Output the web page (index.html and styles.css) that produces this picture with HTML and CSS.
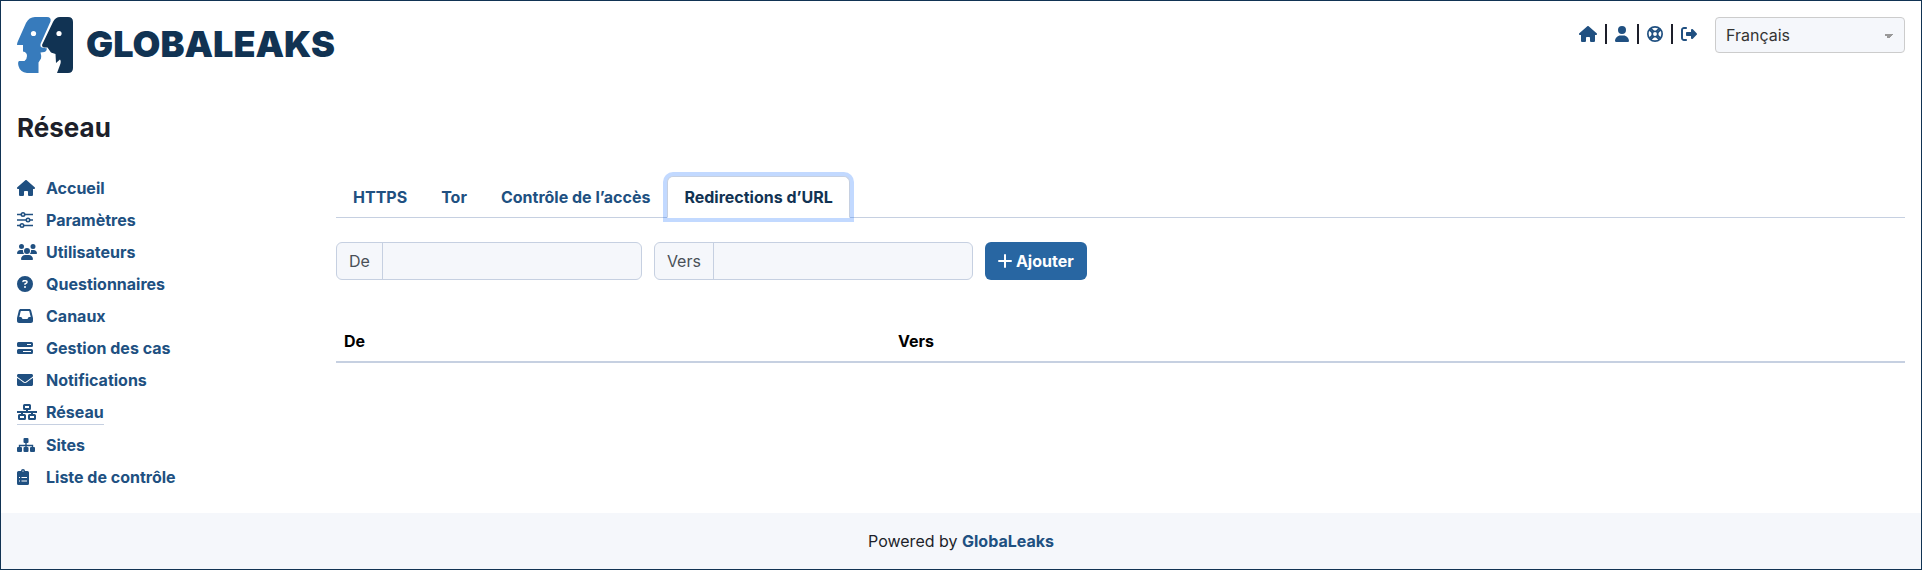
FILE: index.html
```html
<!DOCTYPE html>
<html lang="fr">
<head>
<meta charset="utf-8">
<title>GlobaLeaks - Réseau</title>
<link rel="stylesheet" href="styles.css">
</head>
<body>
<div class="page">
  <header class="header">
    <a class="logo" href="#" aria-label="GlobaLeaks">
      <svg class="logo-mark" viewBox="0 0 56 56" aria-hidden="true">
        <path fill="#377bbc" d="M18 0h12q4.500 0 3.500 4.500L23.500 27q-.5 3 1.500 3.500l5 1q-.5 3-2.500 3.500l-4 .5q1 3 .5 6l-2.500 4V56H10Q3 55 1.500 49q-1-4 .5-5h5.500q2.500-2 2.500-5 0-4-4-4.500V28H0q0-2 1-4L9 6q3-6 9-6z"/>
        <path fill="#113353" d="M43 0h8q5 0 5 5v46q0 5-5 5H40l3-8q1.500-4 0-5.500L39 46l-.5-9-4.500-1.500-3.500-5H27q-2-.5-2-2.500L36 5q2.500-5 7-5z"/>
        <circle cx="16.500" cy="16.500" r="2.600" fill="#fff"/>
        <circle cx="42" cy="16.500" r="2.600" fill="#fff"/>
      </svg>
      <span class="logo-text">GLOBALEAKS</span>
    </a>
    <div class="tools">
      <nav class="quick" aria-label="Compte">
        <a href="#" aria-label="Accueil"><svg class="icon" viewBox="0 0 576 512"><use href="#i-house"/></svg></a>
        <span class="bar"></span>
        <a href="#" aria-label="Préférences"><svg class="icon" viewBox="0 0 448 512"><path d="M224 256A128 128 0 1 0 224 0a128 128 0 1 0 0 256zm-45.700 48C79.800 304 0 383.800 0 482.300C0 498.700 13.300 512 29.700 512H418.300c16.400 0 29.700-13.300 29.700-29.700C448 383.800 368.200 304 269.700 304H178.300z"/></svg></a>
        <span class="bar"></span>
        <a href="#" aria-label="Aide"><svg class="icon" viewBox="0 0 512 512"><g fill="none" stroke="currentColor" stroke-width="54"><circle cx="256" cy="256" r="229"/><circle cx="256" cy="256" r="88"/><path d="M75 117l98 98M117 75l98 98M437 117l-98 98M395 75l-98 98M75 395l98-98M117 437l98-98M437 395l-98-98M395 437l-98-98"/></g></svg></a>
        <span class="bar"></span>
        <a href="#" aria-label="Déconnexion"><svg class="icon" viewBox="0 0 512 512"><path d="M377.900 105.900L500.700 228.700c7.200 7.200 11.300 17.100 11.300 27.300s-4.100 20.100-11.300 27.300L377.900 406.100c-6.400 6.400-15 9.900-24 9.900c-18.700 0-33.900-15.200-33.900-33.900l0-62.100-128 0c-17.700 0-32-14.300-32-32l0-64c0-17.700 14.300-32 32-32l128 0 0-62.100c0-18.700 15.200-33.900 33.900-33.900c9 0 17.600 3.600 24 9.900zM160 96L96 96c-17.700 0-32 14.300-32 32l0 256c0 17.700 14.300 32 32 32l64 0c17.700 0 32 14.300 32 32s-14.300 32-32 32l-64 0c-53 0-96-43-96-96L0 128C0 75 43 32 96 32l64 0c17.700 0 32 14.300 32 32s-14.300 32-32 32z"/></svg></a>
      </nav>
      <select class="lang" aria-label="Langue"><option>Français</option></select>
    </div>
  </header>

  <h1 class="title">Réseau</h1>

  <div class="body">
    <nav class="side" aria-label="Administration">
      <a href="#"><span class="slot"><svg class="icon" viewBox="0 0 576 512"><path id="i-house" d="M575.800 255.500c0 18-15 32.100-32 32.100h-32l.7 160.200c0 2.700-.2 5.400-.5 8.100V472c0 22.100-17.900 40-40 40H456c-1.100 0-2.200 0-3.300-.1c-1.400 .1-2.800 .1-4.200 .1H416 392c-22.100 0-40-17.900-40-40V448 384c0-17.700-14.300-32-32-32H256c-17.700 0-32 14.300-32 32v64 24c0 22.100-17.900 40-40 40H160 128.100c-1.500 0-3-.1-4.500-.2c-1.200 .1-2.400 .2-3.600 .2H104c-22.100 0-40-17.900-40-40V360c0-.9 0-1.900 .1-2.800V287.600H32c-18 0-32-14-32-32.100c0-9 3-17 10-24L266.400 8c7-7 15-8 22-8s15 2 21 7L564.800 231.500c8 7 12 15 11 24z"/></svg></span>Accueil</a>
      <a href="#"><span class="slot"><svg class="icon" viewBox="0 0 16 16"><g fill="none" stroke="currentColor" stroke-width="1.600"><path d="M0 2.500h4M8 2.500h8M0 8h9M13 8h3M0 13.500h3M7 13.500h9"/><circle cx="6" cy="2.500" r="1.700"/><circle cx="11" cy="8" r="1.700"/><circle cx="5" cy="13.500" r="1.700"/></g></svg></span>Paramètres</a>
      <a href="#"><span class="slot"><svg class="icon" viewBox="0 0 640 512"><path d="M144 0a80 80 0 1 1 0 160A80 80 0 1 1 144 0zM512 0a80 80 0 1 1 0 160A80 80 0 1 1 512 0zM0 298.700C0 239.800 47.800 192 106.700 192h42.700c15.900 0 31 3.500 44.600 9.700c-1.300 7.200-1.900 14.700-1.900 22.300c0 38.200 16.800 72.500 43.300 96c-.2 0-.4 0-.7 0H21.300C9.600 320 0 310.400 0 298.700zM405.300 320c-.2 0-.4 0-.7 0c26.600-23.500 43.300-57.800 43.300-96c0-7.600-.7-15-1.900-22.300c13.600-6.300 28.700-9.700 44.600-9.700h42.700C592.200 192 640 239.800 640 298.700c0 11.800-9.600 21.300-21.300 21.300H405.300zM224 224a96 96 0 1 1 192 0 96 96 0 1 1 -192 0zM128 485.300C128 411.700 187.700 352 261.300 352H378.700C452.300 352 512 411.700 512 485.300c0 14.700-11.900 26.700-26.700 26.700H154.700c-14.700 0-26.700-11.900-26.700-26.700z"/></svg></span>Utilisateurs</a>
      <a href="#"><span class="slot"><svg class="icon" viewBox="0 0 512 512"><path fill-rule="evenodd" d="M256 512A256 256 0 1 0 256 0a256 256 0 1 0 0 512zM169.800 165.300c7.900-22.300 29.100-37.300 52.800-37.300h58.300c34.900 0 63.100 28.300 63.100 63.100c0 22.600-12.100 43.500-31.700 54.800L280 264.400c-.2 13-10.900 23.600-24 23.600c-13.300 0-24-10.700-24-24V250.500c0-8.600 4.600-16.500 12.100-20.800l44.300-25.400c4.700-2.700 7.600-7.700 7.600-13.100c0-8.400-6.800-15.100-15.100-15.100H222.600c-3.400 0-6.400 2.100-7.500 5.300l-.4 1.200c-4.400 12.500-18.200 19-30.600 14.600s-19-18.200-14.600-30.600l.4-1.200zM224 352a32 32 0 1 1 64 0 32 32 0 1 1 -64 0z"/></svg></span>Questionnaires</a>
      <a href="#"><span class="slot"><svg class="icon" viewBox="0 0 512 512"><path d="M121 32C91.600 32 66 52 58.900 80.500L1.900 308.400C.6 313.500 0 318.700 0 323.900V416c0 35.300 28.700 64 64 64H448c35.300 0 64-28.700 64-64V323.900c0-5.200-.6-10.400-1.900-15.500l-57-227.900C446 52 420.400 32 391 32H121zm0 64H391l48 192H387.800c-12.100 0-23.200 6.800-28.600 17.700l-14.300 28.600c-5.400 10.800-16.500 17.700-28.600 17.700H195.800c-12.100 0-23.200-6.800-28.600-17.700l-14.300-28.600c-5.400-10.800-16.500-17.700-28.600-17.700H73L121 96z"/></svg></span>Canaux</a>
      <a href="#"><span class="slot"><svg class="icon" viewBox="0 0 16 16"><path fill-rule="evenodd" d="M1.500 2h13Q16 2 16 3.500v2Q16 7 14.500 7h-13Q0 7 0 5.500v-2Q0 2 1.500 2zM10 4v1h4V4zM1.500 9h13Q16 9 16 10.500v2q0 1.500-1.500 1.500h-13Q0 14 0 12.500v-2Q0 9 1.500 9zM6 11v1h8v-1z"/></svg></span>Gestion des cas</a>
      <a href="#"><span class="slot"><svg class="icon" viewBox="0 0 512 512"><path d="M502.300 190.800c3.900-3.100 9.700-.2 9.700 4.700V400c0 26.500-21.500 48-48 48H48c-26.500 0-48-21.500-48-48V195.600c0-5 5.700-7.800 9.700-4.700 22.400 17.400 52.100 39.500 154.100 113.600 21.100 15.400 56.700 47.800 92.200 47.600 35.700.3 72-32.800 92.300-47.600 102-74.100 131.600-96.300 154-113.700zM256 320c23.200.4 56.600-29.200 73.400-41.400 132.700-96.300 142.800-104.700 173.400-128.700 5.800-4.500 9.200-11.500 9.200-18.900v-19c0-26.500-21.500-48-48-48H48c-26.500 0-48 21.500-48 48v19c0 7.400 3.400 14.300 9.200 18.900 30.600 23.900 40.700 32.400 173.400 128.700 16.800 12.200 50.200 41.800 73.400 41.400z"/></svg></span>Notifications</a>
      <a href="#" class="current" aria-current="page"><span class="slot"><svg class="icon" viewBox="0 0 20 16"><g fill="none" stroke="currentColor" stroke-width="2"><rect x="7" y="1" width="6" height="4" rx=".5"/><rect x="2" y="11" width="6" height="4" rx=".5"/><rect x="12" y="11" width="6" height="4" rx=".5"/><path d="M10 5v3M0 8h20M5 8v3M15 8v3"/></g></svg></span>Réseau</a>
      <a href="#"><span class="slot"><svg class="icon" viewBox="0 0 18 16"><rect x="6.500" y="1" width="5" height="5" rx="1"/><rect y="10" width="5" height="5" rx="1"/><rect x="6.500" y="10" width="5" height="5" rx="1"/><rect x="13" y="10" width="5" height="5" rx="1"/><path fill="none" stroke="currentColor" stroke-width="1.400" d="M9 5v6M2.500 11V8.500h13V11"/></svg></span>Sites</a>
      <a href="#"><span class="slot"><svg class="icon" viewBox="0 0 12 16"><path fill-rule="evenodd" d="M1.500 2H4a2 2 0 0 1 4 0h2.500Q12 2 12 3.500v11q0 1.500-1.500 1.500h-9Q0 16 0 14.500v-11Q0 2 1.500 2zM6 1.400a.7.7 0 1 0 0 1.400.7.700 0 1 0 0-1.400zM2 8v1h1V8zM4.500 8v1H10V8zM2 11.500v1h1v-1zM4.500 11.500v1H10v-1z"/></svg></span>Liste de contrôle</a>
    </nav>

    <main class="main">
      <div class="tabs" role="tablist">
        <button type="button" role="tab" class="tab">HTTPS</button>
        <button type="button" role="tab" class="tab">Tor</button>
        <button type="button" role="tab" class="tab">Contrôle de l’accès</button>
        <button type="button" role="tab" class="tab active" aria-selected="true">Redirections d’URL</button>
      </div>
      <form class="form">
        <div class="group"><label for="from">De</label><input id="from" type="text"></div>
        <div class="group"><label for="to">Vers</label><input id="to" type="text"></div>
        <button type="button" class="add"><svg class="plus" viewBox="0 0 14 14" aria-hidden="true"><path d="M7 1v12M1 7h12" fill="none" stroke="currentColor" stroke-width="2" stroke-linecap="round"/></svg>Ajouter</button>
      </form>
      <table class="table">
        <thead><tr><th class="col-from">De</th><th>Vers</th></tr></thead>
      </table>
    </main>
  </div>

  <footer class="footer">Powered by <a href="#">GlobaLeaks</a></footer>
</div>
</body>
</html>
```
FILE: styles.css
```css
* { box-sizing: border-box; }

body {
  margin: 0;
  font: 16px/24px Inter, "Liberation Sans", sans-serif;
  color: #1d1f2a;
  background: #fff;
}

a { color: #205081; text-decoration: none; font-weight: 700; }

.page {
  min-height: 100vh;
  display: flex;
  flex-direction: column;
  border: 1px solid #113353;
}

.header {
  display: flex;
  justify-content: space-between;
  align-items: flex-start;
  padding: 16px 16px 0;
}

.logo { display: flex; align-items: center; gap: 13px; color: #113353; }
.logo-mark { width: 56px; height: 56px; }
.logo-text { font-size: 36px; line-height: 54px; padding-bottom: 2px; font-weight: 900; }

.tools { display: flex; gap: 18px; }
.quick { display: flex; align-items: center; gap: 8px; height: 34px; }
.quick a { display: flex; }
.bar { width: 2px; height: 20px; background: #1d1f2a; }

.icon { height: 16px; display: block; fill: currentColor; }

.lang {
  appearance: none;
  width: 190px;
  height: 36px;
  padding: 0 10px;
  font: inherit;
  color: #333;
  border: 1px solid #ccc;
  border-radius: 4px;
  background-color: #f5f7fb;
  background-image:
    linear-gradient(45deg, transparent 50%, #999 50%),
    linear-gradient(135deg, #999 50%, transparent 50%);
  background-repeat: no-repeat;
  background-position: right 15px top 16px, right 10px top 16px;
  background-size: 5px 5px;
}

.title { margin: 39px 16px 0; font-size: 26px; line-height: 32px; font-weight: 700; }

.body { flex: 1; display: flex; padding: 32px 16px 24px; }

.side {
  flex: 0 0 319px;
  display: flex;
  flex-direction: column;
  align-items: flex-start;
  gap: 8px;
}
.side a { display: flex; align-items: center; }
.slot { width: 29px; }
.current { border-bottom: 1px solid #c6d0e1; }

.main { flex: 1; min-width: 0; }

.tabs { display: flex; border-bottom: 1px solid #c6d0e1; }
.tab {
  height: 42px;
  margin-bottom: -1px;
  padding: 0 16px;
  font: inherit;
  font-weight: 700;
  color: #205081;
  background: none;
  border: 1px solid transparent;
  border-radius: 6px 6px 0 0;
}
.active {
  color: #113353;
  background: #fff;
  border-color: #c6d0e1 #c6d0e1 #fff;
  box-shadow: 0 0 0 4px rgba(13, 102, 255, 0.25);
}

.form { display: flex; gap: 12px; padding-top: 24px; }
.group {
  display: flex;
  height: 38px;
  color: #495057;
  background: #f5f7fb;
  border: 1px solid #c6d0e1;
  border-radius: 6px;
}
.group label { padding: 6px 12px; border-right: 1px solid #c6d0e1; }
.group input {
  width: 258px;
  padding: 0 12px;
  font: inherit;
  border: 0;
  outline: 0;
  background: none;
}
.add {
  display: flex;
  align-items: center;
  gap: 4px;
  height: 38px;
  padding: 0 13px;
  font: inherit;
  font-weight: 700;
  color: #fff;
  background: #2866a2;
  border: 0;
  border-radius: 6px;
}
.plus { width: 14px; height: 14px; }

.table { width: 100%; margin-top: 41px; border-collapse: collapse; color: #000; }
.table th {
  padding: 8px;
  text-align: left;
  font-weight: 700;
  border-bottom: 2px solid #c6d0e1;
}
.col-from { width: 554px; }

.footer { padding: 16px; text-align: center; background: #f5f7fb; }
```
